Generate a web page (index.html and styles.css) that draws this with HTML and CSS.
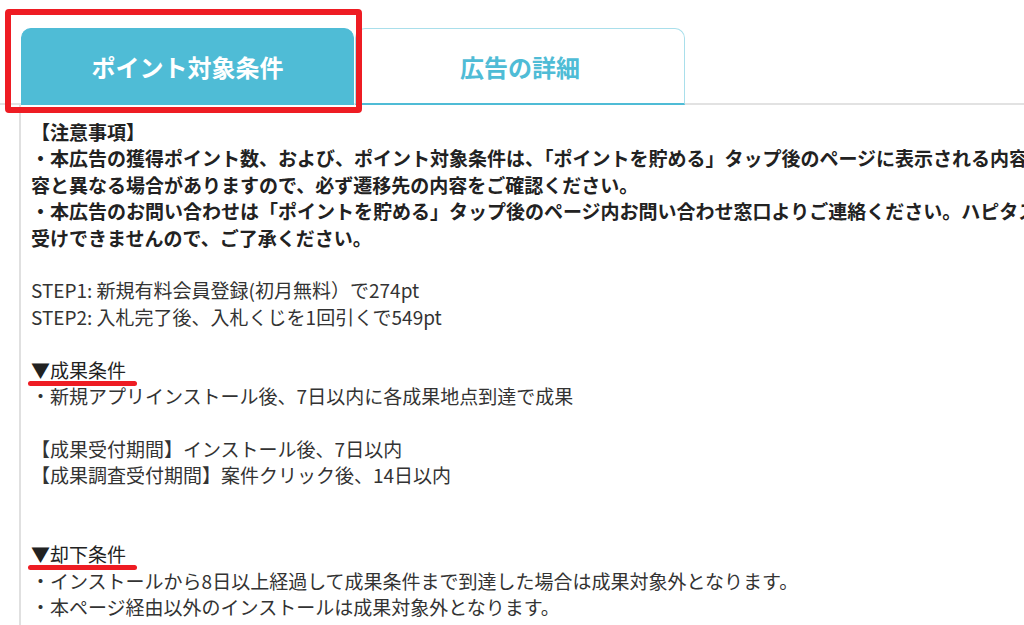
FILE: index.html
```html
<!DOCTYPE html>
<html lang="ja">
<head>
<meta charset="UTF-8" />
<meta name="viewport" content="width=device-width, initial-scale=1" />
<title>ポイント対象条件</title>
<link rel="stylesheet" href="styles.css">
</head>
<body>

<div class="tabs">
  <div class="tab active">ポイント対象条件</div>
  <div class="tab">広告の詳細</div>
  <div class="mark-box"></div>
</div>

<div class="content">
  <p class="notice">
    <span class="line">【注意事項】</span>
    <span class="line">・本広告の獲得ポイント数、および、ポイント対象条件は、「ポイントを貯める」タップ後のページに表示される内容</span>
    <span class="line">容と異なる場合がありますので、必ず遷移先の内容をご確認ください。</span>
    <span class="line">・本広告のお問い合わせは「ポイントを貯める」タップ後のページ内お問い合わせ窓口よりご連絡ください。ハピタス</span>
    <span class="line">受けできませんので、ご了承ください。</span>
  </p>

  <p>
    <span class="line">STEP1: 新規有料会員登録(初月無料）で274pt</span>
    <span class="line">STEP2: 入札完了後、入札くじを1回引くで549pt</span>
  </p>

  <p>
    <span class="line"><span class="underline">▼成果条件</span></span>
    <span class="line">・新規アプリインストール後、7日以内に各成果地点到達で成果</span>
  </p>

  <p class="gap-lg">
    <span class="line">【成果受付期間】インストール後、7日以内</span>
    <span class="line">【成果調査受付期間】案件クリック後、14日以内</span>
  </p>

  <p>
    <span class="line"><span class="underline">▼却下条件</span></span>
    <span class="line">・インストールから8日以上経過して成果条件まで到達した場合は成果対象外となります。</span>
    <span class="line">・本ページ経由以外のインストールは成果対象外となります。</span>
  </p>
</div>

</body>
</html>
```

FILE: styles.css
```css
* {
  box-sizing: border-box;
}
body {
  margin: 0;
  height: 100vh;
  display: flex;
  flex-direction: column;
  background: #fff;
  color: #333;
  font-family: "Noto Sans CJK JP", "Noto Sans", sans-serif;
  overflow: hidden;
}

/* タブ */
.tabs {
  position: relative;
  display: flex;
  flex-shrink: 0;
  padding: 28px 0 0 21px;
  border-bottom: 2px solid #e2e2e2;
}
.tab {
  width: 330px;
  height: 77px;
  margin-bottom: -2px;
  display: flex;
  justify-content: center;
  align-items: center;
  font-size: 24px;
  font-weight: 700;
  color: #4fbcd6;
  background: #fff;
  border: 1px solid #a9dfeb;
  border-bottom: 2px solid #4fbcd6;
  border-radius: 10px 10px 0 0;
}
.tab.active {
  width: 333px;
  margin-right: 1px;
  color: #fff;
  background: #4fbcd6;
  border-color: #4fbcd6;
}

/* 赤枠(注釈) */
.mark-box {
  position: absolute;
  left: 5px;
  top: 9px;
  width: 357px;
  height: 104px;
  border: 6px solid #ee1c23;
  border-radius: 4px;
  pointer-events: none;
}

/* 本文 */
.content {
  flex: 1;
  min-height: 0;
  margin-left: 19px;
  padding: 14px 0 0 10px;
  border-left: 2px solid #e0e0e0;
  font-size: 19px;
  line-height: 26.4px;
  overflow: hidden;
}
.content p {
  margin: 0 0 26.4px 0;
}
.content p.gap-lg {
  margin-bottom: 52.8px;
}
.line {
  display: block;
  white-space: nowrap;
}
.notice {
  font-weight: 700;
  color: #222;
}
.underline {
  position: relative;
  color: #222;
}
.underline::after {
  content: "";
  position: absolute;
  left: -3px;
  right: -11px;
  bottom: -3px;
  height: 5px;
  background: #ee1c23;
  border-radius: 3px;
}
```
